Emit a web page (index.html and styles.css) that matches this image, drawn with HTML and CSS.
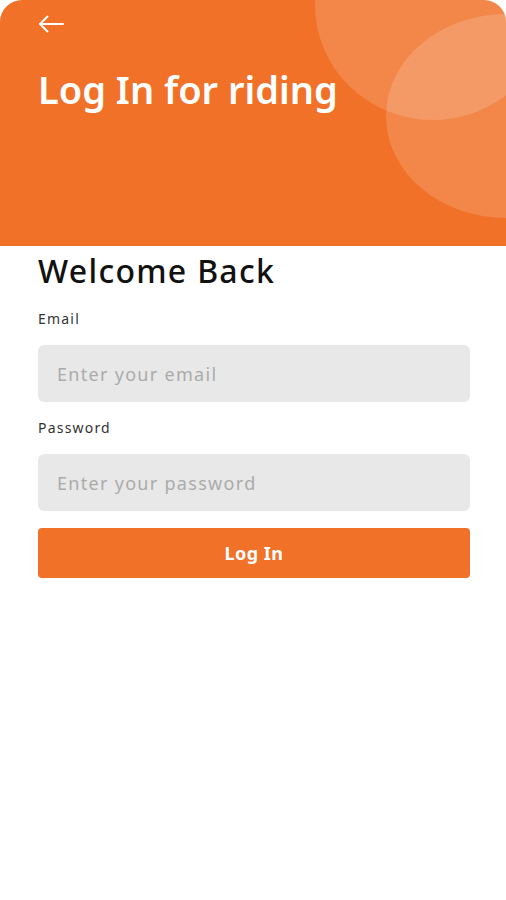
FILE: index.html
```html
<!DOCTYPE html>
<html lang="en">
  <head>
    <meta charset="UTF-8" />
    <meta name="viewport" content="width=device-width, initial-scale=1.0" />
    <title>Log In</title>
    <link rel="stylesheet" href="styles.css">
  </head>
  <body>
    <div class="header">
      <span class="circle one"></span>
      <span class="circle two"></span>
      <a class="back" href="#">
        <svg width="26" height="18" viewBox="0 0 26 18">
          <path d="M25 9H2M9.5 1.5 2 9l7.5 7.5" fill="none" stroke="#fff" stroke-width="2" stroke-linecap="round" stroke-linejoin="round" />
        </svg>
      </a>
      <h1>Log In for riding</h1>
    </div>
    <form action="">
      <h2>Welcome Back</h2>
      <label for="email">Email</label>
      <input type="text" id="email" name="email" placeholder="Enter your email" />
      <label for="password">Password</label>
      <input type="password" id="password" name="password" placeholder="Enter your password" />
      <button>Log In</button>
    </form>
  </body>
</html>
```

FILE: styles.css
```css
* {
  margin: 0;
  padding: 0;
  box-sizing: border-box;
}
body {
  background: #fff;
  font-family: "Noto Sans", sans-serif;
}
.header {
  position: relative;
  height: 246px;
  background-color: #f07127;
  border-radius: 22px 22px 0 0;
  overflow: hidden;
  padding: 15px 38px 0;
}
.circle {
  position: absolute;
  border-radius: 50%;
  background: rgba(255, 255, 255, 0.16);
}
.circle.one {
  width: 236px;
  height: 230px;
  left: 315px;
  top: -110px;
}
.circle.two {
  width: 240px;
  height: 204px;
  left: 386px;
  top: 14px;
}
.back {
  position: relative;
  display: block;
  width: 26px;
  height: 18px;
}
.back svg {
  display: block;
}
.header h1 {
  position: relative;
  margin-top: 30px;
  color: #fff;
  font-size: 38px;
  font-weight: 600;
  line-height: 52px;
}
form {
  padding: 7px 36px 0 38px;
}
form h2 {
  font-size: 32px;
  font-weight: 500;
  line-height: 36px;
  letter-spacing: 1.3px;
  color: #111;
  margin-bottom: 21px;
}
form label {
  display: block;
  font-size: 14px;
  line-height: 18px;
  color: #333;
  letter-spacing: 1.2px;
  margin-bottom: 17px;
}
form input {
  display: block;
  width: 100%;
  height: 57px;
  border: none;
  border-radius: 6px;
  background: #e8e8e8;
  padding: 0 19px;
  font-family: "Noto Sans", sans-serif;
  font-size: 18px;
  letter-spacing: 1.3px;
  margin-bottom: 17px;
  outline: none;
}
form input::placeholder {
  color: #ababab;
}
form button {
  display: block;
  width: 100%;
  height: 50px;
  border: none;
  border-radius: 4px;
  background-color: #f07127;
  color: #fff;
  font-family: "Noto Sans", sans-serif;
  font-size: 18px;
  font-weight: 700;
  letter-spacing: 0.5px;
  cursor: pointer;
}
```
